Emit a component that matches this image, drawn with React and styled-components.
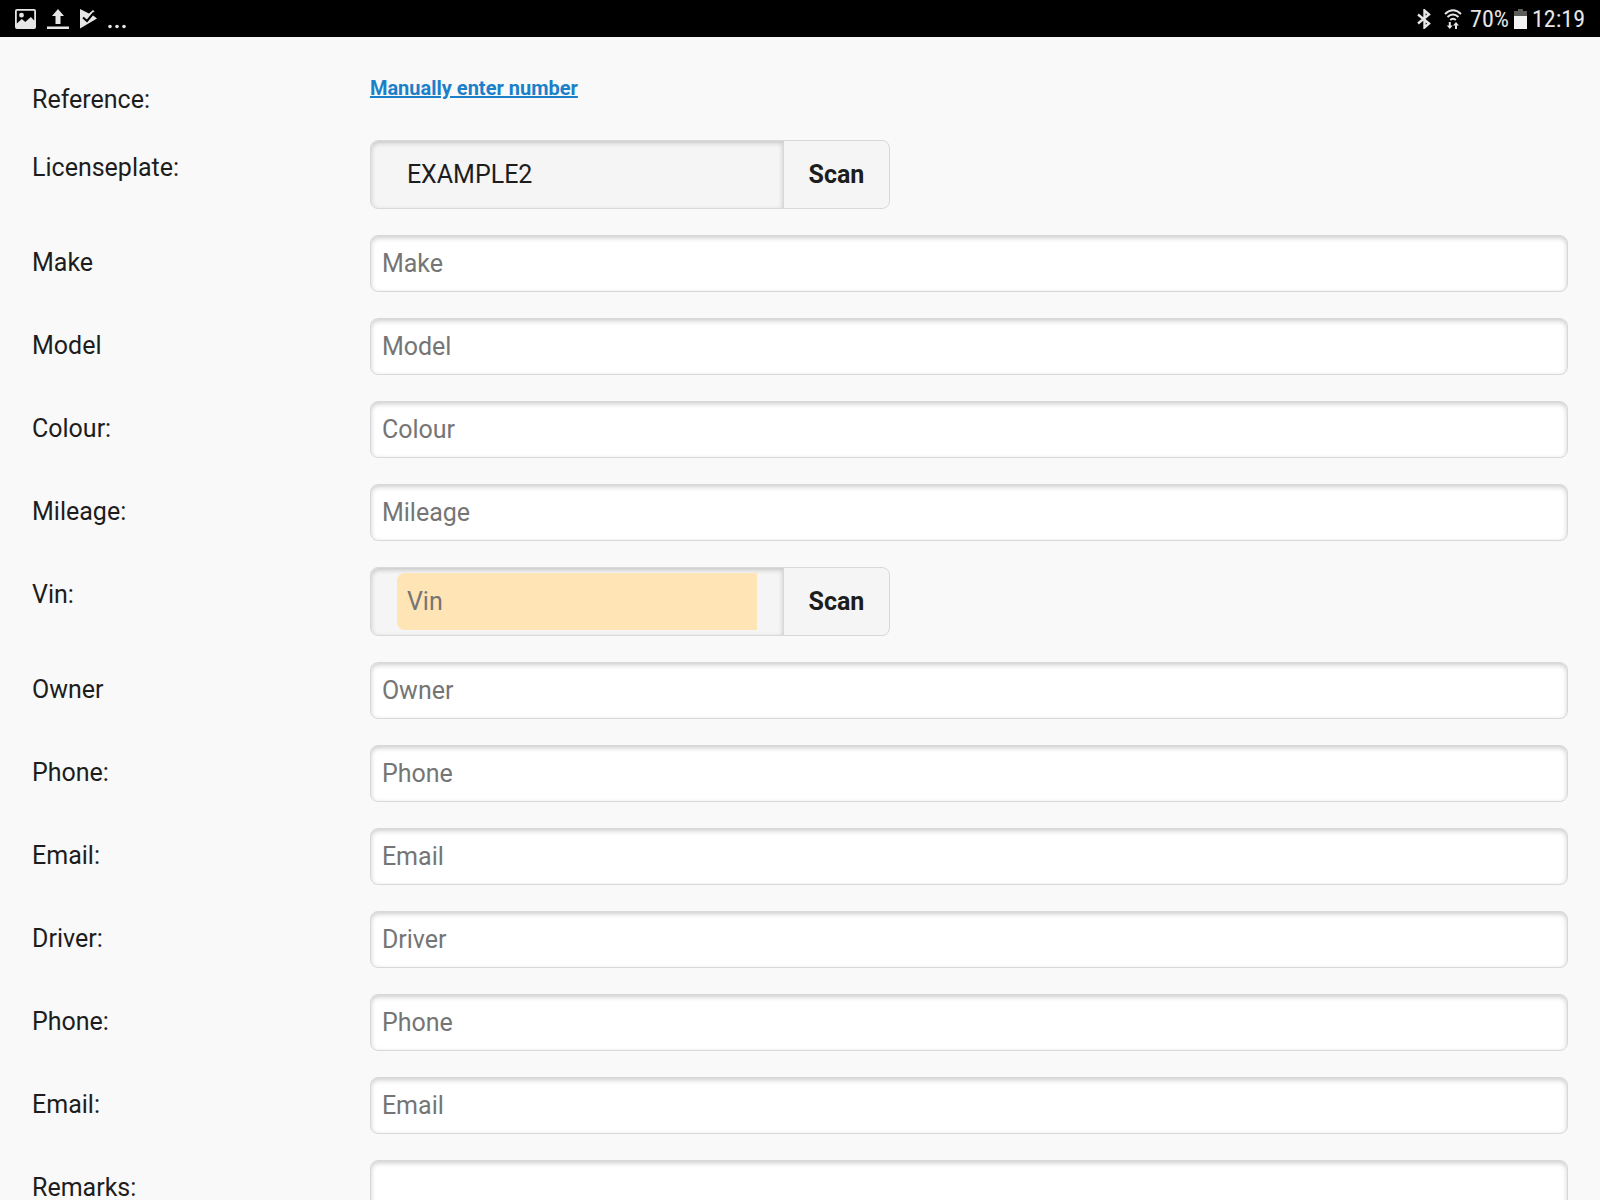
import React, { useState } from 'react'
import styled, { createGlobalStyle } from 'styled-components'

const COLORS = {
  PAGE: '#f9f9f9',
  PANEL: '#f5f5f5',
  BORDER: '#d8d8d8',
  TEXT: '#1d1d1d',
  PLACEHOLDER: '#757575',
  LINK: '#1c80c9',
  REQUIRED: '#ffe4b5',
  STATUS: '#e6e6e6'
}

const GlobalStyle = createGlobalStyle`
  * {
    box-sizing: border-box;
  }

  body {
    margin: 0;
    background: ${COLORS.PAGE};
    color: ${COLORS.TEXT};
    font-family: Roboto, "Liberation Sans", sans-serif;
    font-size: 25px;
  }
`

const StatusBar = styled.header`
  display: flex;
  align-items: center;
  justify-content: space-between;
  height: 37px;
  padding: 0 15px;
  background: #000;
  color: ${COLORS.STATUS};
  font-family: "Roboto Condensed", Roboto, sans-serif;
  font-size: 24px;
`

const StatusGroup = styled.div`
  display: flex;
  align-items: center;
  gap: ${props => props.$gap}px;

  svg {
    display: block;
    fill: currentColor;
  }
`

const Form = styled.form`
  display: flex;
  flex-direction: column;
  gap: 26px;
  padding: 35px 32px;
`

const Row = styled.div`
  display: grid;
  grid-template-columns: 22% 78%;
  align-items: start;
`

const Label = styled.label`
  padding-top: 13px;
  line-height: 29px;
`

const ManualLink = styled.a`
  justify-self: start;
  color: ${COLORS.LINK};
  font-size: 20px;
  font-weight: 700;
  line-height: 32px;
`

const StyledInput = styled.input`
  width: 100%;
  height: 57px;
  padding: 0 11px;
  border: 1px solid ${COLORS.BORDER};
  border-radius: 8px;
  background: #fff;
  box-shadow: inset 0 2px 5px rgba(0, 0, 0, 0.2);
  color: inherit;
  font: inherit;

  &::placeholder {
    color: ${COLORS.PLACEHOLDER};
    opacity: 1;
  }

  &:focus {
    outline: none;
  }
`

const TextArea = styled(StyledInput)`
  display: block;
  height: 120px;
  padding: 11px;
  resize: none;
`

const ScanGroup = styled.div`
  display: flex;
  width: 520px;
  height: 69px;
  border: 1px solid ${COLORS.BORDER};
  border-radius: 8px;
  background: ${COLORS.PANEL};
  overflow: hidden;
`

const ScanField = styled.div`
  flex: 1;
  min-width: 0;
  padding: 5px 26px;
  border-right: 1px solid ${COLORS.BORDER};
  border-radius: 8px 0 0 8px;
  box-shadow: inset 0 2px 5px rgba(0, 0, 0, 0.2);
`

const ScanInput = styled(StyledInput)`
  padding: 0 10px;
  border: none;
  border-radius: 8px 0 0 8px;
  background: ${props => props.$required ? COLORS.REQUIRED : 'transparent'};
  box-shadow: none;
`

const ScanButton = styled.button`
  width: 105px;
  padding: 0;
  border: none;
  background: transparent;
  color: inherit;
  font: inherit;
  font-weight: 700;
`

const PictureIcon = () => (
  <svg width="22" height="20" viewBox="0 0 22 20" aria-hidden="true">
    <path fillRule="evenodd" d="M2 0h17a2 2 0 0 1 2 2v16a2 2 0 0 1-2 2H2a2 2 0 0 1-2-2V2a2 2 0 0 1 2-2zM1.800 1.800v12.700l5-4.500 3.500 3 5.500-5 3.400 3.500V1.800zM6.500 3.800a2.400 2.400 0 1 1 0 4.800A2.400 2.400 0 0 1 6.500 3.800z" />
  </svg>
)

const UploadIcon = () => (
  <svg width="22" height="20" viewBox="0 0 22 20" aria-hidden="true">
    <path d="M11 0l6 7h-3.500v8h-5V7H5zM0 17.500h22V20H0z" />
  </svg>
)

const PlayCheckIcon = () => (
  <svg width="19" height="20" viewBox="0 0 19 20" aria-hidden="true">
    <path d="M1 0L10 4.500 14 1l1.500 1.500L13.500 6 18 9.500 1 19.500z" />
    <path d="M4 8.500l4 3.500L15 3.500" style={{ fill: 'none' }} stroke="#000" strokeWidth="2" />
  </svg>
)

const MoreIcon = () => (
  <svg width="18" height="20" viewBox="0 0 18 20" aria-hidden="true">
    <circle cx="2" cy="17.500" r="1.800" />
    <circle cx="9" cy="17.500" r="1.800" />
    <circle cx="16" cy="17.500" r="1.800" />
  </svg>
)

const BluetoothIcon = () => (
  <svg width="14" height="20" viewBox="0 0 14 20" aria-hidden="true">
    <path d="M1 5.500l11 9-4.500 4V1.500l4.500 4-11 9" style={{ fill: 'none' }} stroke="currentColor" strokeWidth="2.400" />
  </svg>
)

const WifiIcon = () => (
  <svg width="18" height="20" viewBox="0 0 18 20" aria-hidden="true">
    <g style={{ fill: 'none' }} stroke="currentColor" strokeWidth="2">
      <path d="M1 5q8-7.500 16 0M3.500 8q5.500-5 11 0M6.200 11q2.800-2.500 5.600 0" />
    </g>
    <path d="M4.800 13h2v3.500h2L5.800 20l-3-3.500h2zM11 20h2v-3.500h2L12 13l-3 3.500h2z" />
  </svg>
)

const BatteryIcon = () => (
  <svg width="13" height="20" viewBox="0 0 13 20" aria-hidden="true">
    <path d="M4 0h5v2h4v5H0V2h4z" style={{ fill: '#5c5c5c' }} />
    <path d="M0 7h13v13H0z" style={{ fill: '#f4f4f4' }} />
  </svg>
)

const Field = ({ id, label, ...rest }) => (
  <Row>
    <Label htmlFor={id}>{label}</Label>
    <StyledInput id={id} {...rest} />
  </Row>
)

const ScanRow = ({ id, label, placeholder, initial = '', required }) => {
  const [value, setValue] = useState(initial)

  return (
    <Row>
      <Label htmlFor={id}>{label}</Label>
      <ScanGroup>
        <ScanField>
          <ScanInput
            id={id}
            type='text'
            placeholder={placeholder}
            value={value}
            onChange={e => setValue(e.target.value)}
            $required={required && !value}
          />
        </ScanField>
        <ScanButton type='button'>Scan</ScanButton>
      </ScanGroup>
    </Row>
  )
}

const App = () => (
  <>
    <GlobalStyle />
    <StatusBar>
      <StatusGroup $gap={10}>
        <PictureIcon />
        <UploadIcon />
        <PlayCheckIcon />
        <MoreIcon />
      </StatusGroup>
      <StatusGroup $gap={8}>
        <StatusGroup $gap={13}>
          <BluetoothIcon />
          <WifiIcon />
        </StatusGroup>
        <StatusGroup $gap={5}>
          <span>70%</span>
          <BatteryIcon />
          <span>12:19</span>
        </StatusGroup>
      </StatusGroup>
    </StatusBar>
    <Form>
      <Row>
        <Label as='span'>Reference:</Label>
        <ManualLink href='#reference'>Manually enter number</ManualLink>
      </Row>
      <ScanRow id='licenseplate' label='Licenseplate:' placeholder='Licenseplate' initial='EXAMPLE2' />
      <Field id='make' label='Make' type='text' placeholder='Make' />
      <Field id='model' label='Model' type='text' placeholder='Model' />
      <Field id='colour' label='Colour:' type='text' placeholder='Colour' />
      <Field id='mileage' label='Mileage:' type='text' placeholder='Mileage' />
      <ScanRow id='vin' label='Vin:' placeholder='Vin' required />
      <Field id='owner' label='Owner' type='text' placeholder='Owner' />
      <Field id='owner-phone' label='Phone:' type='tel' placeholder='Phone' />
      <Field id='owner-email' label='Email:' type='email' placeholder='Email' />
      <Field id='driver' label='Driver:' type='text' placeholder='Driver' />
      <Field id='driver-phone' label='Phone:' type='tel' placeholder='Phone' />
      <Field id='driver-email' label='Email:' type='email' placeholder='Email' />
      <Row>
        <Label htmlFor='remarks'>Remarks:</Label>
        <TextArea as='textarea' id='remarks' />
      </Row>
    </Form>
  </>
)

export default App
